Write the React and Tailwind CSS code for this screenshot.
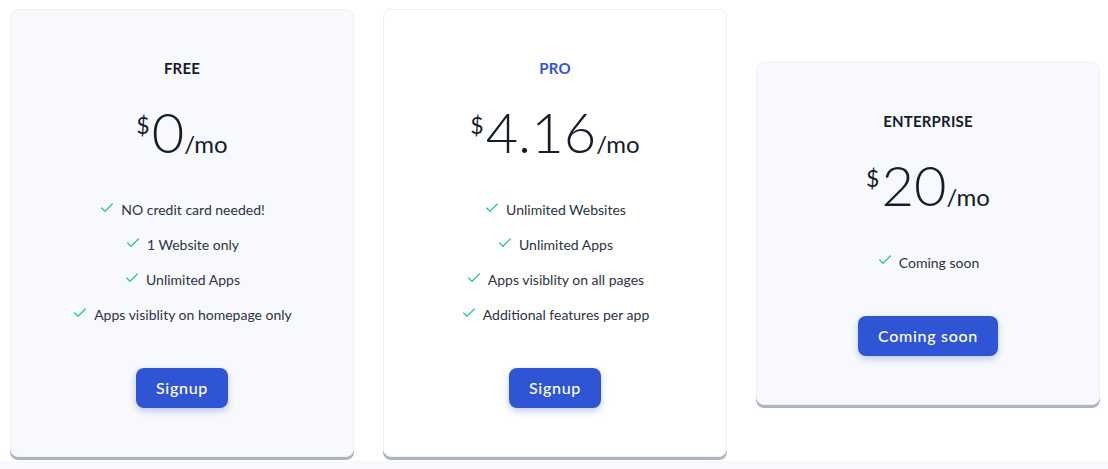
import React from 'react';
import { Check } from 'lucide-react';

const plans = [
    {
        name: 'FREE',
        price: '0',
        highlight: false,
        bg: 'bg-[#f8f9fc]',
        features: ['NO credit card needed!', '1 Website only', 'Unlimited Apps', 'Apps visiblity on homepage only'],
        cta: 'Signup',
    },
    {
        name: 'PRO',
        price: '4.16',
        highlight: true,
        bg: 'bg-white',
        features: ['Unlimited Websites', 'Unlimited Apps', 'Apps visiblity on all pages', 'Additional features per app'],
        cta: 'Signup',
    },
    {
        name: 'ENTERPRISE',
        price: '20',
        highlight: false,
        bg: 'bg-[#f8f9fc]',
        features: ['Coming soon'],
        cta: 'Coming soon',
    },
];

const PlanCard = ({ plan }) => (
    <div
        className={`w-[344px] rounded-lg border border-[#eef0f5] ${plan.bg} shadow-[0_3px_0_#adb5bd] pt-[47px] pb-[48px] flex flex-col items-center`}
    >
        <h3
            className={`text-[15px] leading-[22px] font-bold tracking-[0.2px] ${
                plan.highlight ? 'text-[#2f55d4]' : 'text-[#161c2d]'
            }`}
        >
            {plan.name}
        </h3>

        <div className="mt-[25px] leading-none text-[#161c2d] whitespace-nowrap">
            <span className="text-[23px] relative -top-[19px] mr-[2px]">$</span>
            <span className="text-[56px] font-light">{plan.price}</span>
            <span className="text-[24px]">/mo</span>
        </div>

        <ul className="mt-[32px] flex flex-col items-center">
            {plan.features.map(f => (
                <li key={f} className="h-[35px] flex items-center gap-[6px] text-[14px] text-[#2c3342]">
                    <Check className="w-[16px] h-[16px] text-[#2eca8b] -mt-[4px]" strokeWidth={2} />
                    <span>{f}</span>
                </li>
            ))}
        </ul>

        <button className="mt-[36px] h-[40px] px-[20px] rounded-lg bg-[#2f55d4] text-white text-[16px] font-medium tracking-[0.7px] shadow-[0_3px_7px_rgba(47,85,212,0.3)]">
            {plan.cta}
        </button>
    </div>
);

const App = () => {
    return (
        <div className="min-h-[469px] bg-[#f8f9fc] font-['Lato','Liberation_Sans',sans-serif]">
            <div className="bg-white h-[461px] pl-[10px] pt-[9px]">
                <div className="flex items-center gap-[29px]">
                    {plans.map(p => (
                        <PlanCard key={p.name} plan={p} />
                    ))}
                </div>
            </div>
        </div>
    );
};

export default App;
